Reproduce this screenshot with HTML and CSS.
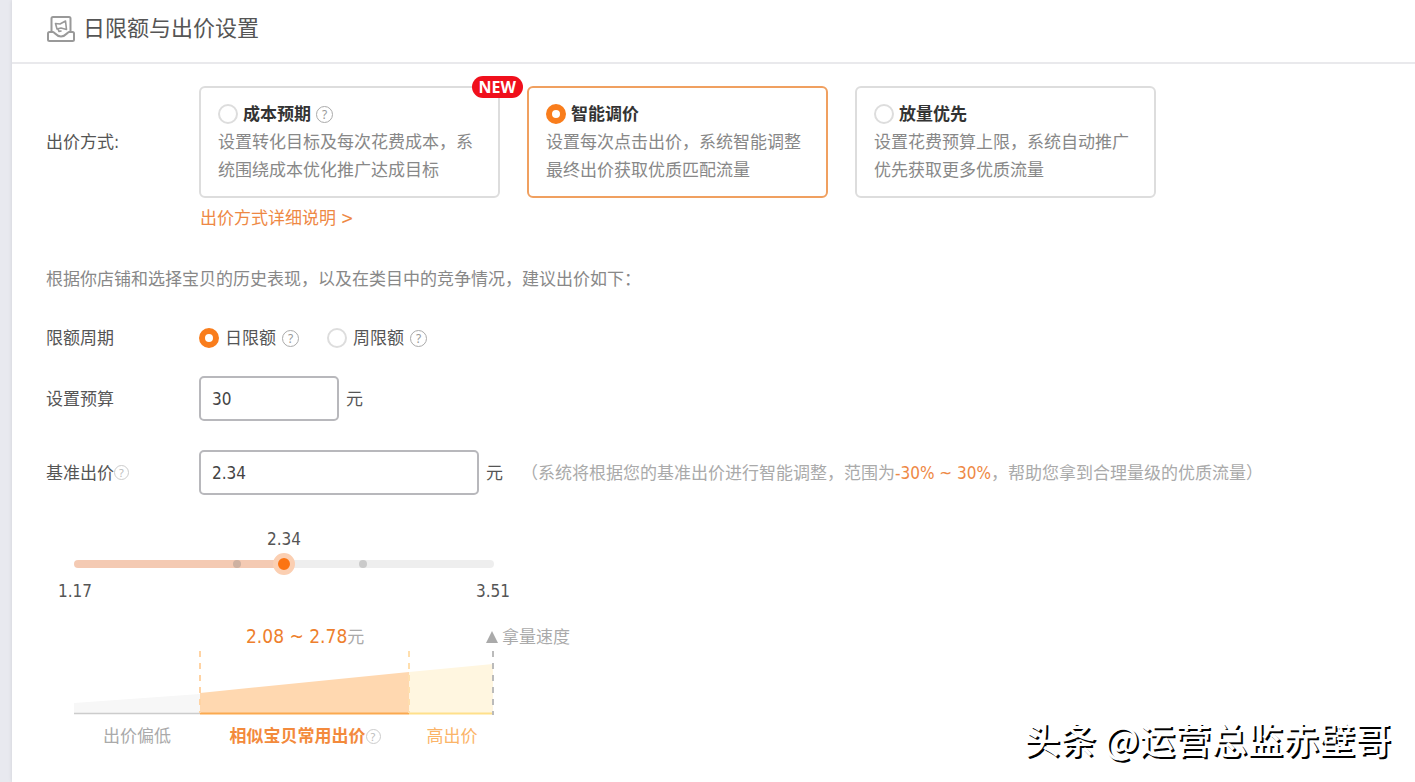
FILE: index.html
```html
<!DOCTYPE html>
<html lang="zh-CN">
<head>
    <meta charset="UTF-8">
    <meta name="viewport" content="width=device-width, initial-scale=1.0">
    <title>日限额与出价设置</title>
    <link rel="stylesheet" href="styles.css">
</head>
<body>
    <main class="panel">
        <header class="panel-header">
            <svg class="header-icon" width="28" height="26" viewBox="0 0 28 26" fill="none" stroke="#999" stroke-width="2" stroke-linejoin="round" stroke-linecap="round">
                <path d="M4.500 16V2.500Q4.500 1 6 1H22Q23.500 1 23.500 2.500V16"/>
                <path d="M4 16H2.500Q1 16 1 17.500V23.500Q1 25 2.500 25H25.500Q27 25 27 23.500V17.500Q27 16 25.500 16H22C19.500 16.500 19 20.500 14 20.500C9 20.500 8.500 16.500 6 16H4"/>
                <path d="M8.500 7.500L13 8L18.500 5L19.500 13.500L14 12L10 13ZM11 13L12 15.500L14 15" stroke-width="1.600"/>
            </svg>
            <h1>日限额与出价设置</h1>
        </header>

        <form class="form">
            <div class="row bid-row">
                <span class="label">出价方式:</span>
                <div class="cards">
                    <div class="card">
                        <div class="card-title">
                            <input type="radio" name="bid" id="bid-cost">
                            <label for="bid-cost">成本预期</label>
                            <button type="button" class="help" aria-label="成本预期说明">?</button>
                        </div>
                        <p>设置转化目标及每次花费成本，系统围绕成本优化推广达成目标</p>
                        <span class="badge">NEW</span>
                    </div>
                    <div class="card active">
                        <div class="card-title">
                            <input type="radio" name="bid" id="bid-smart" checked>
                            <label for="bid-smart">智能调价</label>
                        </div>
                        <p>设置每次点击出价，系统智能调整最终出价获取优质匹配流量</p>
                    </div>
                    <div class="card">
                        <div class="card-title">
                            <input type="radio" name="bid" id="bid-volume">
                            <label for="bid-volume">放量优先</label>
                        </div>
                        <p>设置花费预算上限，系统自动推广优先获取更多优质流量</p>
                    </div>
                </div>
            </div>
            <a class="more-link" href="#">出价方式详细说明 &gt;</a>

            <p class="tip">根据你店铺和选择宝贝的历史表现，以及在类目中的竞争情况，建议出价如下：</p>

            <div class="row period-row">
                <span class="label">限额周期</span>
                <div class="option">
                    <input type="radio" name="period" id="period-day" checked>
                    <label for="period-day">日限额</label>
                    <button type="button" class="help" aria-label="日限额说明">?</button>
                </div>
                <div class="option">
                    <input type="radio" name="period" id="period-week">
                    <label for="period-week">周限额</label>
                    <button type="button" class="help" aria-label="周限额说明">?</button>
                </div>
            </div>

            <div class="row budget-row">
                <label class="label" for="budget">设置预算</label>
                <input type="text" class="text-input short" id="budget" value="30">
                <span class="unit">元</span>
            </div>

            <div class="row price-row">
                <div class="label">
                    <label for="price">基准出价</label><button type="button" class="help light" aria-label="基准出价说明">?</button>
                </div>
                <input type="text" class="text-input" id="price" value="2.34">
                <span class="unit">元</span>
                <span class="note">（系统将根据您的基准出价进行智能调整，范围为<em>-30% ~ 30%</em>，帮助您拿到合理量级的优质流量）</span>
            </div>

            <div class="bid-range">
                <output class="slider-value" for="slider">2.34</output>
                <div class="slider">
                    <input type="range" id="slider" aria-label="基准出价" min="1.17" max="3.51" step="0.01" value="2.34">
                    <span class="tick" style="left: 38.9%"></span>
                    <span class="tick" style="left: 68.8%"></span>
                </div>
                <div class="slider-ends">
                    <span>1.17</span>
                    <span>3.51</span>
                </div>

                <div class="chart-head">
                    <span class="suggest"><strong>2.08 ~ 2.78</strong>元</span>
                    <span class="speed">
                        <svg width="12" height="12" viewBox="0 0 12 12"><path d="M6 0L12 12H0Z" fill="#aaa"/></svg>
                        拿量速度
                    </span>
                </div>
                <svg class="chart" viewBox="0 0 420 64">
                    <path d="M0 52L126 43V62H0Z" fill="#f7f7f7"/>
                    <path d="M126 42L335 21V62H126Z" fill="#ffd8b0"/>
                    <path d="M335 21L419 13V62H335Z" fill="#fff6e0"/>
                    <path d="M0 62.500H126" stroke="#ccc" stroke-width="1.500"/>
                    <path d="M126 62.500H335" stroke="#fba94f" stroke-width="2"/>
                    <path d="M335 62.500H419" stroke="#ffe08a" stroke-width="2"/>
                    <path d="M126 0V62" stroke="#ffd3a3" stroke-width="2" stroke-dasharray="6 6"/>
                    <path d="M335 0V62" stroke="#ffdfae" stroke-width="2" stroke-dasharray="6 6"/>
                    <path d="M419 0V64" stroke="#bbb" stroke-width="2" stroke-dasharray="6 6"/>
                </svg>
                <div class="chart-labels">
                    <span>出价偏低</span>
                    <span class="common">相似宝贝常用出价<button type="button" class="help light" aria-label="常用出价说明">?</button></span>
                    <span class="high">高出价</span>
                </div>
            </div>
        </form>
    </main>
    <div class="watermark">头条 @运营总监赤壁哥</div>
</body>
</html>
```

FILE: styles.css
```css
* {
    box-sizing: border-box;
}
body {
    margin: 0;
    padding-left: 12px;
    background-color: #e8e9ef;
    color: #555;
    font-family: "DejaVu Sans Condensed", "Noto Sans CJK SC", sans-serif;
    font-size: 17px;
    line-height: 28px;
}
h1, p {
    margin: 0;
    font-weight: normal;
}
input, button {
    margin: 0;
    font-family: inherit;
}
.panel {
    min-height: 100vh;
    background-color: #fff;
    box-shadow: 0 0 4px rgba(0, 0, 0, 0.1);
}
.panel-header {
    display: flex;
    align-items: center;
    gap: 8px;
    height: 64px;
    padding: 0 35px 4px;
    border-bottom: 2px solid #e9e9ec;
}
.panel-header h1 {
    font-size: 22px;
}
.form {
    padding: 22px 34px 0;
}
.row {
    display: flex;
    align-items: center;
}
.label {
    display: flex;
    align-items: center;
    flex: 0 0 153px;
}

/* bid type cards */
.cards {
    display: flex;
    flex: 1;
    gap: 27px;
}
.card {
    position: relative;
    flex: 0 1 301px;
    padding: 12px 17px;
    border: 2px solid #ddd;
    border-radius: 6px;
    color: #888;
}
.card.active {
    border-color: #f0a060;
}
.card-title {
    display: flex;
    align-items: center;
    gap: 5px;
    color: #333;
    font-weight: bold;
}
.badge {
    position: absolute;
    top: -12px;
    right: -25px;
    padding: 0 7px;
    border-radius: 11px;
    background-color: #f0101c;
    color: #fff;
    font-family: "Open Sans", sans-serif;
    font-size: 16px;
    font-weight: bold;
    line-height: 22px;
}
.more-link {
    display: block;
    width: fit-content;
    margin: 6px 0 0 154px;
    color: #ee8844;
    text-decoration: none;
}

/* controls */
input[type="radio"] {
    appearance: none;
    flex: none;
    width: 20px;
    height: 20px;
    border: 2px solid #ddd;
    border-radius: 50%;
    background-color: #fff;
}
input[type="radio"]:checked {
    border: 6px solid #f97d1c;
}
.help {
    flex: none;
    width: 17px;
    height: 17px;
    padding: 0;
    border: 1px solid #aaa;
    border-radius: 50%;
    background: none;
    color: #999;
    font-family: "Noto Sans", sans-serif;
    font-size: 12px;
    line-height: 15px;
    cursor: pointer;
}
.help.light {
    width: 15px;
    height: 15px;
    border-color: #ccc;
    color: #bbb;
    font-size: 11px;
    line-height: 13px;
}
.text-input {
    width: 280px;
    height: 45px;
    padding: 0 11px;
    border: 2px solid #b8b8bc;
    border-radius: 5px;
    color: #444;
    font-size: 17px;
}
.text-input.short {
    width: 140px;
}
.unit {
    margin-left: 7px;
}

.tip {
    margin-top: 33px;
    color: #888;
}
.period-row {
    margin-top: 31px;
}
.option {
    display: flex;
    align-items: center;
    gap: 6px;
    margin-right: 28px;
}
.budget-row {
    margin-top: 24px;
}
.price-row {
    margin-top: 29px;
}
.note {
    margin-left: 18px;
    color: #aaa;
}
.note em {
    color: #ee8844;
    font-style: normal;
}

/* slider and price chart */
.bid-range {
    width: 420px;
    margin: 30px 0 0 28px;
}
.slider-value {
    display: block;
    text-align: center;
}
.slider {
    position: relative;
    height: 22px;
}
.slider input {
    appearance: none;
    display: block;
    width: 100%;
    height: 22px;
    background: none;
}
.slider input::-webkit-slider-runnable-track {
    height: 8px;
    border-radius: 4px;
    background: linear-gradient(to right, #f4cab3 50%, #eee 50%);
}
.slider input::-webkit-slider-thumb {
    appearance: none;
    width: 22px;
    height: 22px;
    margin-top: -7px;
    border: 5px solid #fbcfb2;
    border-radius: 50%;
    background-color: #fb7412;
}
.tick {
    position: absolute;
    top: 7px;
    width: 8px;
    height: 8px;
    margin-left: -4px;
    border-radius: 50%;
    background-color: rgba(120, 120, 120, 0.3);
}
.slider-ends {
    display: flex;
    justify-content: space-between;
    margin: 2px -16px 0;
}
.chart-head {
    display: flex;
    align-items: center;
    justify-content: space-between;
    margin: 17px -76px 0 172px;
    color: #aaa;
}
.suggest strong {
    color: #ee7f2d;
    font-size: 19px;
    font-weight: normal;
}
.speed {
    display: flex;
    align-items: center;
    gap: 4px;
}
.chart {
    display: block;
    width: 100%;
}
.chart-labels {
    display: grid;
    grid-template-columns: 30% 50% 20%;
    margin-top: 7px;
    color: #aaa;
    text-align: center;
    white-space: nowrap;
}
.common {
    display: flex;
    align-items: center;
    justify-content: center;
    color: #f38a3c;
    font-weight: bold;
}
.high {
    color: #fbb468;
}

.watermark {
    position: absolute;
    right: 24px;
    bottom: 18px;
    color: #fff;
    font-family: "Noto Sans CJK SC", sans-serif;
    font-size: 36px;
    font-weight: 500;
    line-height: 52px;
    text-shadow: 2px 2px 0 #000;
}
```
